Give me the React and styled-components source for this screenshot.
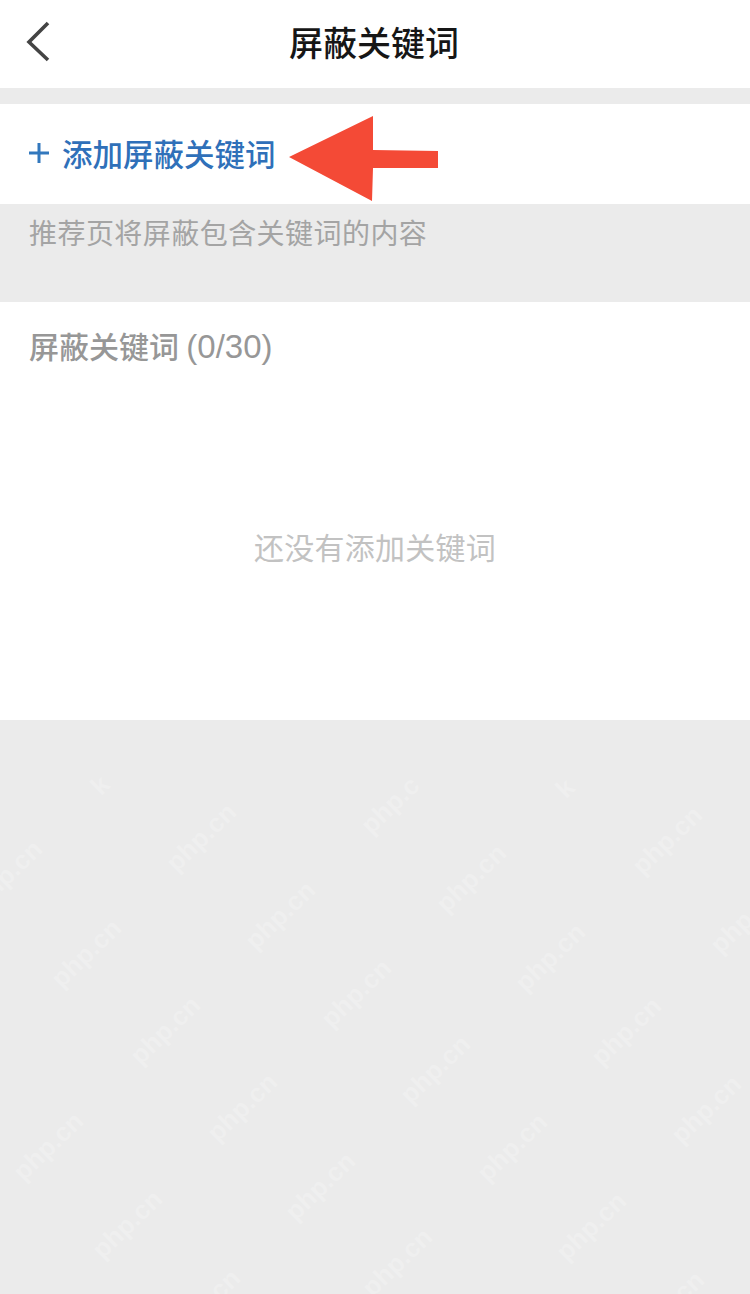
import React from 'react'
import styled, { createGlobalStyle } from 'styled-components'

const GlobalStyle = createGlobalStyle`
  html, body {
    margin: 0;
    padding: 0;
    background: #ebebeb;
  }
  * {
    box-sizing: border-box;
  }
`

const marks = [
  ['k', 100, 785], ['php.c', 390, 805], ['k', 565, 788],
  ['php.cn', 201, 837], ['php.cn', 7, 874], ['php.cn', 471, 878], ['php.cn', 667, 840],
  ['php.cn', 280, 915], ['php.cn', 550, 957], ['php.cn', 86, 953], ['php.cn', 745, 919],
  ['php.cn', 356, 993], ['php.cn', 165, 1030], ['php.cn', 626, 1031],
  ['php.cn', 435, 1069],
  ['php.cn', 242, 1107], ['php.cn', 48, 1146], ['php.cn', 706, 1109], ['php.cn', 512, 1147],
  ['php.cn', 320, 1186], ['php.cn', 127, 1224], ['php.cn', 591, 1226], ['php.cn', 397, 1262],
  ['php.cn', 205, 1303], ['php.cn', 669, 1305],
]

export default function App() {
  return (
    <Page>
      <GlobalStyle />
      <NavBar>
        <BackIcon viewBox="0 0 30 46" fill="none">
          <path d="M24 4 L5 23 L24 41" stroke="#444" strokeWidth="3.6" />
        </BackIcon>
        <Title>屏蔽关键词</Title>
      </NavBar>
      <AddRow>
        <PlusIcon viewBox="0 0 20 20">
          <path d="M0 10 H20 M10 0 V20" stroke="#3278bd" strokeWidth="3" />
        </PlusIcon>
        <AddLabel>添加屏蔽关键词</AddLabel>
        <Arrow viewBox="0 0 150 86">
          <path d="M0 41 L84 0 L84 34 L149 35 L149 52 L84 52 L83 85 Z" fill="#f44a36" />
        </Arrow>
      </AddRow>
      <HintBar>
        <Hint>推荐页将屏蔽包含关键词的内容</Hint>
      </HintBar>
      <ListCard>
        <ListHeading>屏蔽关键词 <Count>(0/30)</Count></ListHeading>
        <EmptyText>还没有添加关键词</EmptyText>
      </ListCard>
      <Backdrop>
        {marks.map(([text, x, y], i) => (
          <Mark key={i} $x={x} $y={y - 720}>{text}</Mark>
        ))}
      </Backdrop>
    </Page>
  )
}

const Page = styled.div`
  width: 750px;
  height: 1294px;
  display: flex;
  flex-direction: column;
  overflow: hidden;
  background: #ebebeb;
  font-family: "Liberation Sans", "Noto Sans CJK SC", sans-serif;
`

const NavBar = styled.header`
  position: relative;
  height: 88px;
  flex: none;
  display: flex;
  align-items: center;
  justify-content: center;
  padding-right: 2px;
  background: #fff;
`

const BackIcon = styled.svg`
  position: absolute;
  left: 24px;
  top: 19px;
  width: 30px;
  height: 46px;
`

const Title = styled.h1`
  margin: 0;
  font-size: 34px;
  line-height: 88px;
  font-weight: 500;
  color: #161616;
`

const AddRow = styled.div`
  position: relative;
  height: 100px;
  flex: none;
  margin-top: 16px;
  padding: 0 0 0 29px;
  display: flex;
  align-items: center;
  background: #fff;
`

const PlusIcon = styled.svg`
  width: 20px;
  height: 20px;
  flex: none;
  margin-right: 13px;
  position: relative;
  top: -1px;
`

const AddLabel = styled.span`
  font-size: 30.5px;
  line-height: 1;
  font-weight: 500;
  color: #2f70b9;
  position: relative;
  top: 1px;
`

const Arrow = styled.svg`
  position: absolute;
  left: 289px;
  top: 12px;
  width: 150px;
  height: 86px;
`

const HintBar = styled.div`
  height: 98px;
  flex: none;
  padding: 14px 29px 0;
`

const Hint = styled.p`
  margin: 0;
  font-size: 28px;
  line-height: 34px;
  letter-spacing: 0.45px;
  color: #a4a4a4;
`

const ListCard = styled.section`
  height: 418px;
  flex: none;
  padding: 27px 29px 0;
  display: flex;
  flex-direction: column;
  background: #fff;
`

const ListHeading = styled.h2`
  margin: 0;
  font-size: 30px;
  line-height: 36px;
  font-weight: 500;
  color: #979797;
`

const Count = styled.span`
  font-size: 33px;
  margin-left: -1px;
`

const EmptyText = styled.p`
  margin: 165px 0 0;
  text-align: center;
  font-size: 30px;
  line-height: 36px;
  letter-spacing: 0.25px;
  color: #c2c2c2;
`

const Backdrop = styled.div`
  position: relative;
  flex: 1;
  background: #ebebeb;
`

const Mark = styled.span`
  position: absolute;
  left: ${p => p.$x}px;
  top: ${p => p.$y}px;
  transform: translate(-50%, -50%) rotate(-44deg);
  font-family: "Liberation Sans", sans-serif;
  font-size: 26px;
  font-weight: 700;
  line-height: 1;
  white-space: nowrap;
  color: rgba(255, 255, 255, 0.22);
`
